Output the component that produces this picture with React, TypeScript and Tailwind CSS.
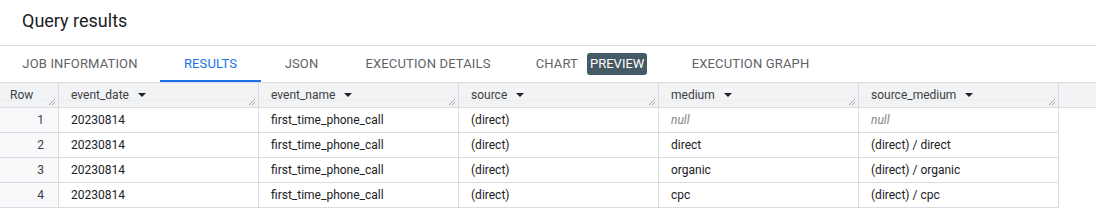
import type { ReactNode } from 'react'

type Tab = { label: string; width: string; active?: boolean; badge?: string }

const tabs: Tab[] = [
  { label: 'JOB INFORMATION', width: 'w-[160px]' },
  { label: 'RESULTS', width: 'w-[101px]', active: true },
  { label: 'JSON', width: 'w-[81px]' },
  { label: 'EXECUTION DETAILS', width: 'w-[172px]' },
  { label: 'CHART', width: 'w-[155px]', badge: 'PREVIEW' },
  { label: 'EXECUTION GRAPH', width: 'w-[163px]' },
]

const columns = ['event_date', 'event_name', 'source', 'medium', 'source_medium']

const rows: (string | null)[][] = [
  ['20230814', 'first_time_phone_call', '(direct)', null, null],
  ['20230814', 'first_time_phone_call', '(direct)', 'direct', '(direct) / direct'],
  ['20230814', 'first_time_phone_call', '(direct)', 'organic', '(direct) / organic'],
  ['20230814', 'first_time_phone_call', '(direct)', 'cpc', '(direct) / cpc'],
]

function SortArrow() {
  return (
    <svg width="8" height="4" viewBox="0 0 8 4" className="ml-[9px] shrink-0">
      <path d="M0 0h8L4 4z" fill="#202124" />
    </svg>
  )
}

function ResizeGrip() {
  return (
    <svg width="7" height="7" viewBox="0 0 7 7" className="absolute right-[3px] bottom-[2px]">
      <path d="M1 7L7 1M4 7L7 4" stroke="#5f6368" strokeWidth="0.8" strokeDasharray="1 0.6" />
    </svg>
  )
}

function HeaderCell({ children, width }: { children: ReactNode; width: string }) {
  return (
    <div className={`relative flex h-full items-center border-r border-[#dadce0] ${width}`}>
      <div className="absolute right-[10px] bottom-[6px] left-0 border-b border-dotted border-[#e3e5e8]" />
      {children}
      <ResizeGrip />
    </div>
  )
}

export default function App() {
  return (
    <div className="h-[209px] w-[1096px] overflow-hidden bg-white font-['Roboto',sans-serif] text-[#202124]">
      <div className="flex h-[46px] items-center border-b border-[#dadce0] pl-[22px] pb-[4px] text-[18px]">
        Query results
      </div>

      <div className="flex h-[36px]">
        {tabs.map((tab) => (
          <div
            key={tab.label}
            className={`relative flex shrink-0 items-center justify-center gap-[9px] text-[13px] tracking-[0.15px] ${tab.width} ${
              tab.active ? 'text-[#1a73e8]' : 'text-[#5f6368]'
            }`}
          >
            <span>{tab.label}</span>
            {tab.badge && (
              <span className="rounded-[3px] bg-[#455a64] px-[3px] py-[1px] text-[13px] tracking-normal text-white">
                {tab.badge}
              </span>
            )}
            {tab.active && <div className="absolute right-0 bottom-0 left-0 h-[2px] bg-[#1a73e8]" />}
          </div>
        ))}
      </div>

      <div className="flex h-[26px] border-y border-[#dadce0] bg-[#f1f3f4] text-[12px] text-[#3c4043]">
        <HeaderCell width="w-[59px]">
          <span className="pl-[10px]">Row</span>
        </HeaderCell>
        {columns.map((col) => (
          <HeaderCell key={col} width="w-[200px]">
            <span className="pl-3">{col}</span>
            <SortArrow />
          </HeaderCell>
        ))}
      </div>

      {rows.map((row, i) => (
        <div key={i} className="flex h-[25px] text-[12px]">
          <div className="flex w-[59px] items-center justify-end border-r border-b border-[#dadce0] bg-[#f8f9fa] pr-[14px] text-[#3c4043]">
            {i + 1}
          </div>
          {row.map((cell, j) => (
            <div key={j} className="flex w-[200px] items-center border-r border-b border-[#dadce0] pl-3">
              {cell === null ? <span className="italic text-[#80868b]">null</span> : cell}
            </div>
          ))}
        </div>
      ))}
    </div>
  )
}
